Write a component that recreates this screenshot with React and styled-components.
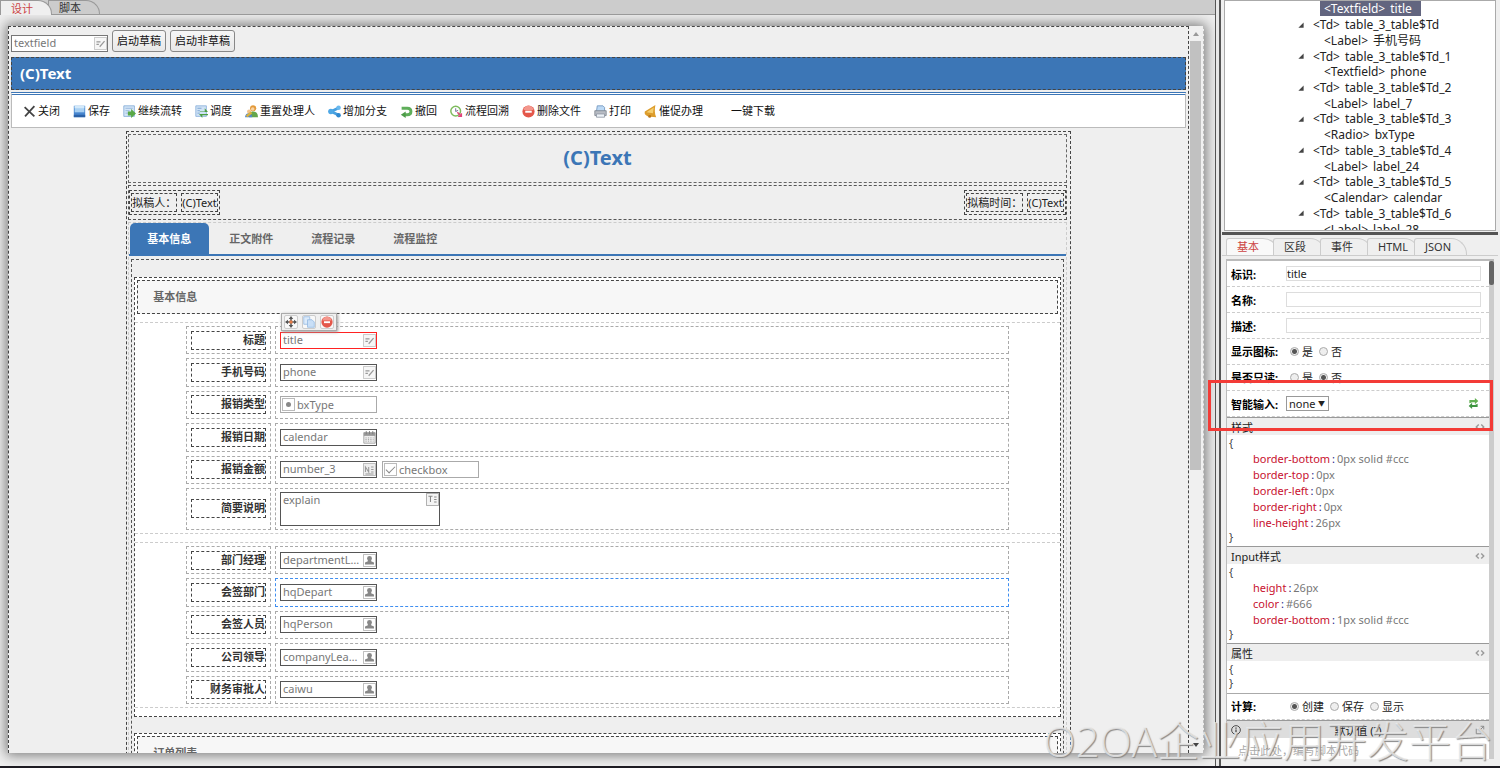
import React from "react";
import styled, { createGlobalStyle } from "styled-components";

const Colors = {
  Blue: "#3c76b6",
  Page: "#efefef",
  Bar: "#cccccc",
  Dark: "#444444",
  Red: "#f33b37",
};

const GlobalStyle = createGlobalStyle`
  * {
    box-sizing: border-box;
  }
  body {
    margin: 0;
    overflow: hidden;
    background: #efefef;
    font-family: "Noto Sans", "Noto Sans CJK SC", sans-serif;
    font-size: 11px;
    color: #222;
  }
  button, input, select, textarea {
    font: inherit;
    color: inherit;
    margin: 0;
  }
  ul, h1, h2, h3, p {
    margin: 0;
    padding: 0;
    font: inherit;
    list-style: none;
  }
`;

const App = styled.div`
  position: relative;
  display: flex;
  height: 100vh;
  overflow: hidden;
  border-bottom: 2px solid #1d1b22;
`;

/* ---------- designer ---------- */

const Designer = styled.main`
  display: flex;
  flex-direction: column;
  flex: 1;
  min-width: 0;
`;

const TopTabs = styled.div`
  display: flex;
  height: 15px;
  flex: none;
  background: ${Colors.Bar};
  border-bottom: 1px solid #999;
`;

const TopTab = styled.button`
  width: 52px;
  height: ${(p) => (p.$active ? 15 : 14)}px;
  margin-right: -4px;
  padding: 0 10px;
  border: 1px solid #999;
  border-bottom: 0;
  border-radius: 0 14px 0 0;
  background: ${(p) => (p.$active ? Colors.Page : Colors.Bar)};
  color: ${(p) => (p.$active ? "#c44" : "#333")};
  position: relative;
  z-index: ${(p) => (p.$active ? 1 : 0)};
  line-height: 13px;
  text-align: left;
  white-space: nowrap;
`;

const Stage = styled.div`
  display: flex;
  flex: 1;
  min-height: 0;
  padding: 11px 11px 13px 8px;
  overflow: hidden;
`;

const Sheet = styled.div`
  display: flex;
  flex: 1;
  min-width: 0;
  background: ${Colors.Page};
  border-right: 1px dashed #bbb;
  box-shadow: 0 0 12px 2px #777;
`;

const Form = styled.div`
  flex: 1;
  min-width: 0;
  overflow: hidden;
  padding: 2px;
  border: 1px dashed ${Colors.Dark};
  border-bottom: 0;
`;

const ScrollTrack = styled.div`
  display: flex;
  flex-direction: column;
  align-items: center;
  width: 14px;
  padding: 6px 2px 6px 1px;
  background: #f0f0f0;
`;

const Arrow = styled.i`
  flex: none;
  border: 3px solid transparent;
  border-top: ${(p) => (p.$down ? "4px solid #444" : "0")};
  border-bottom: ${(p) => (p.$down ? "0" : "4px solid #999")};
`;

const ScrollThumb = styled.div`
  width: 100%;
  height: 60%;
  margin: 5px 0 auto;
  background: #c1c1c1;
`;

const TopRow = styled.div`
  display: flex;
  gap: 4px;
  height: 28px;
  align-items: flex-start;
  padding-top: 1px;
`;

const FieldSlot = styled.div`
  padding-top: 5px;
`;

const DraftButton = styled.button`
  height: 22px;
  padding: 0 4px;
  border: 1px solid #888;
  border-radius: 3px;
  background: linear-gradient(#f6f6f6, #e8e8e8);
  color: #111;
  line-height: 20px;
`;

const Banner = styled.div`
  height: 33px;
  padding: 0 8px;
  border: 1px dashed ${Colors.Dark};
  background: ${Colors.Blue};
  color: #fff;
  font-size: 15px;
  font-weight: 700;
  line-height: 30px;
`;

const Toolbar = styled.div`
  display: flex;
  gap: 13px;
  align-items: center;
  height: 36px;
  margin: 2px 0 3px;
  padding: 0 11px;
  border: 1px solid #bbb;
  border-top: 3px double ${Colors.Blue};
  background: #fff;
`;

const ToolButton = styled.button`
  display: flex;
  gap: 2px;
  align-items: center;
  padding: 0;
  border: 0;
  background: none;
  color: #111;
  line-height: 14px;
  white-space: nowrap;
  svg {
    width: 13px;
    height: 13px;
    flex: none;
  }
`;

const Container = styled.div`
  width: 80.4%;
  margin: 0 auto;
  padding: 2px 3px 0 1px;
  border: 1px dashed ${Colors.Dark};
  border-bottom: 0;
`;

const TitleBox = styled.h1`
  height: 49px;
  border: 1px dashed #666;
  color: ${Colors.Blue};
  font-size: 20px;
  font-weight: 700;
  line-height: 46px;
  text-align: center;
`;

const Meta = styled.div`
  display: flex;
  justify-content: space-between;
  align-items: center;
  height: 35px;
  margin-top: 2px;
  border: 1px dashed #555;
`;

const MetaGroup = styled.div`
  display: flex;
  gap: 4px;
  padding: 2px 1px;
  border: 1px dashed ${Colors.Dark};
`;

const MetaText = styled.span`
  height: 19px;
  border: 1px dashed ${Colors.Dark};
  line-height: 17px;
  white-space: nowrap;
`;

const TabPage = styled.div`
  margin-top: 2px;
  border: 1px dashed #ccc;
`;

const TabList = styled.div`
  display: flex;
  gap: 3px;
  padding-left: 1px;
  border-bottom: 2px solid ${Colors.Blue};
`;

const Tab = styled.button`
  width: 79px;
  height: 31px;
  padding: 0 1px 2px 0;
  border: 0;
  border-radius: 5px 5px 0 0;
  background: ${(p) => (p.$active ? Colors.Blue : "transparent")};
  color: ${(p) => (p.$active ? "#fff" : "#666")};
  font-weight: 700;
`;

const TabBody = styled.div`
  margin: 3px 2px 0;
  padding: 17px 2px 0;
  border: 1px dashed #555;
`;

const Section = styled.section`
  margin-bottom: 16px;
  padding: 2px 0 8px;
  border: 1px dashed ${Colors.Dark};
  background: #fff;
`;

const SectionTitle = styled.h2`
  height: 34px;
  margin: 0 2px 8px;
  padding: 0 15px;
  border: 1px dashed ${Colors.Dark};
  background: #f7f7f7;
  color: #666;
  font-weight: 700;
  line-height: 32px;
`;

const TableBox = styled.div`
  margin-bottom: ${(p) => (p.$gap ? 8 : 0)}px;
  padding: 3px 0;
  border-top: 1px dashed #ccc;
  border-bottom: 1px dashed #ccc;
`;

const FormGrid = styled.div`
  display: grid;
  grid-template-columns: 85px 1fr;
  grid-template-rows: ${(p) => p.$rows};
  gap: 4px;
  width: 89%;
  height: ${(p) => p.$height}px;
  margin: 0 auto;
`;

const Cell = styled.div`
  display: flex;
  align-items: center;
  gap: 5px;
  min-width: 0;
  padding: 0 4px;
  border: 1px dashed ${(p) => (p.$selected ? "#3f8ef0" : "#aaa")};
`;

const Label = styled.label`
  flex: 1;
  height: 19px;
  border: 1px dashed ${Colors.Dark};
  color: #333;
  font-weight: 700;
  line-height: 16px;
  text-align: right;
  white-space: nowrap;
`;

const FieldBox = styled.div`
  position: relative;
  display: flex;
  align-items: ${(p) => (p.$tall ? "flex-start" : "center")};
  width: ${(p) => (p.$tall ? 160 : 97)}px;
  height: ${(p) => (p.$tall ? 34 : 17)}px;
  flex: none;
  padding: 0 0 0 ${(p) => (p.$lead ? 1 : 2)}px;
  gap: 1px;
  border: 1px solid ${(p) => p.$line || "#555"};
  background: #fff;
  color: #777;
  > svg {
    width: 13px;
    height: 13px;
    flex: none;
  }
`;

const FieldInput = styled.input`
  flex: 1;
  min-width: 0;
  width: 0;
  height: 15px;
  padding: 0 0 2px;
  border: 0;
  outline: 0;
  background: transparent;
  line-height: 13px;
  text-overflow: ellipsis;
`;

const FieldArea = styled.textarea`
  flex: 1;
  width: 0;
  height: 30px;
  padding: 0;
  border: 0;
  outline: 0;
  resize: none;
  background: transparent;
  line-height: 14px;
`;

const Mark = styled.input`
  appearance: none;
  display: grid;
  place-items: center;
  width: 13px;
  height: 13px;
  border: 1px solid #bbb;
  &[type="radio"]::before {
    content: "";
    width: 5px;
    height: 5px;
    border-radius: 50%;
    background: #888;
  }
  &[type="checkbox"]::before {
    content: "";
    width: 8px;
    height: 4px;
    margin-bottom: 3px;
    border: solid #888;
    border-width: 0 0 1px 1px;
    transform: rotate(-45deg);
  }
`;

const MarkLabel = styled.label`
  display: flex;
  gap: 2px;
  align-items: center;
  line-height: 15px;
`;

const Actions = styled.div`
  position: absolute;
  z-index: 2;
  left: 0;
  bottom: 17px;
  display: flex;
  gap: 4px;
  align-items: center;
  height: 18px;
  padding: 0 2px;
  border: 1px solid #aaa;
  background: #f0f0f0;
  box-shadow: 1px 1px 3px #999;
`;

const ActionButton = styled.button`
  display: flex;
  width: 14px;
  height: 14px;
  padding: 0;
  border: 1px solid #ccc;
  border-radius: 2px;
  background: #f8f8f8;
  svg {
    width: 12px;
    height: 12px;
  }
`;

/* ---------- property side ---------- */

const Divider = styled.div`
  width: 6px;
  flex: none;
  border: solid #555;
  border-width: 0 2px 0 1px;
  background: #e8e8e8;
`;

const Side = styled.aside`
  display: flex;
  flex-direction: column;
  width: 279px;
  flex: none;
  padding: 0 2px 7px 1px;
`;

const TreeBox = styled.div`
  height: 231px;
  flex: none;
  margin: 0 2px;
  overflow: hidden;
  border: 1px solid #aaa;
  background: #fff;
`;

const Tree = styled.ul`
  display: grid;
  grid-auto-rows: 1fr;
  height: 236px;
  padding-left: 73px;
  font-size: 12px;
`;

const TreeItem = styled.li`
  display: flex;
  align-items: center;
  gap: 9px;
  padding-left: ${(p) => (p.$leaf ? 26 : 0)}px;
  color: #222;
  line-height: 15px;
  svg {
    width: 6px;
    height: 6px;
  }
`;

const TreeText = styled.span`
  display: flex;
  gap: 5px;
  margin-left: ${(p) => (p.$selected ? -4 : 0)}px;
  padding: ${(p) => (p.$selected ? "0 9px 0 4px" : "0")};
  background: ${(p) => (p.$selected ? "#62657f" : "none")};
  color: ${(p) => (p.$selected ? "#fff" : "inherit")};
`;

const SideTabs = styled.div`
  display: flex;
  height: 24px;
  flex: none;
  margin-top: 1px;
  padding: 3px 0 0 4px;
  border-top: 3px solid #555;
  border-bottom: 1px solid #ccc;
`;

const SideTab = styled.button`
  width: 53px;
  height: 17px;
  margin-right: -6px;
  padding: 0 10px;
  border: 1px solid #ccc;
  border-bottom: 0;
  border-radius: 3px 16px 0 0;
  background: ${(p) => (p.$active ? "#f9f9f9" : Colors.Page)};
  color: ${(p) => (p.$active ? "#c44" : "#333")};
  line-height: 16px;
  text-align: left;
  white-space: nowrap;
`;

const PropertyBox = styled.div`
  display: flex;
  flex: 1;
  min-height: 0;
  margin: 3px 4px 0 4px;
  border-top: 2px solid #bbb;
  border-left: 1px solid #bbb;
  background: #fff;
`;

const Properties = styled.div`
  flex: 1;
  min-width: 0;
  overflow: hidden;
`;

const SideScroll = styled.div`
  width: 5px;
  background: #ccc;
`;

const SideThumb = styled.div`
  height: 24px;
  border-radius: 2px;
  background: #666;
`;

const PropertyRow = styled.div`
  display: flex;
  align-items: center;
  height: 26px;
  padding: 0 8px 0 4px;
  border-bottom: 1px dashed #ccc;
`;

const Clip = styled.div`
  display: flex;
  align-items: center;
  flex: 1;
  height: ${(p) => (p.$cut ? 13 : 24)}px;
  line-height: 24px;
  overflow: hidden;
`;

const PropertyName = styled.span`
  width: 55px;
  flex: none;
  color: #000;
  font-weight: 700;
  white-space: nowrap;
`;

const PropertyInput = styled.input`
  flex: 1;
  min-width: 0;
  height: 15px;
  padding: 0;
  border: 1px solid #ddd;
  color: #222;
  line-height: 13px;
`;

const RadioLabel = styled.label`
  display: flex;
  align-items: center;
  gap: 3px;
  margin-right: 6px;
  color: #222;
`;

const RadioGroup = styled.div`
  display: flex;
  padding-left: 4px;
`;

const Radio = styled.input`
  appearance: none;
  width: 9px;
  height: 9px;
  border: 1px solid #aaa;
  border-radius: 50%;
  background: #eee;
  &:checked {
    background: radial-gradient(#555 0 2px, #eee 3px);
  }
`;

const SelectBox = styled.div`
  position: relative;
  margin-right: auto;
  &::after {
    content: "▼";
    position: absolute;
    right: 4px;
    top: 0;
    font-size: 7px;
    line-height: 15px;
    pointer-events: none;
  }
`;

const Select = styled.select`
  display: block;
  appearance: none;
  width: 43px;
  height: 15px;
  padding: 0 0 0 2px;
  border: 1px solid #999;
  border-radius: 0;
  background: #fff;
  line-height: 13px;
`;

const RefreshButton = styled.button`
  display: flex;
  padding: 0 2px 0 0;
  border: 0;
  background: none;
  svg {
    width: 11px;
    height: 11px;
  }
`;

const BlockHead = styled.h3`
  display: flex;
  justify-content: space-between;
  align-items: center;
  height: 18px;
  padding: 0 4px;
  border-top: 1px solid #999;
  background: ${(p) => (p.$dark ? "#ddd" : "#eee")};
  color: #222;
  svg {
    width: 10px;
    height: 10px;
  }
`;

const Css = styled.div`
  padding: 0 2px 3px;
  line-height: 16px;
  color: #444;
`;

const CloseBrace = styled.div`
  line-height: 12px;
`;

const Rule = styled.div`
  padding-left: 24px;
  color: #777;
  white-space: nowrap;
`;

const RuleName = styled.span`
  color: #c8102e;
`;

const Colon = styled.span`
  padding: 0 2px;
  color: #228;
`;

const CalcLine = styled.div`
  height: 2px;
  border-bottom: 1px solid #aaa;
`;

const ScriptHint = styled.p`
  padding: 4px 11px;
  color: #aaa;
`;

const Highlight = styled.div`
  position: absolute;
  top: 380px;
  right: 7px;
  width: 285px;
  height: 51px;
  border: 3px solid ${Colors.Red};
`;

const Watermark = styled.div`
  position: absolute;
  right: 7px;
  bottom: -3px;
  color: rgba(236, 236, 236, 0.8);
  font-family: "Open Sans", "Noto Sans CJK SC", sans-serif;
  font-size: 42px;
  font-weight: 300;
  line-height: 56px;
  text-shadow: 1px 1px 1px #888;
  white-space: nowrap;
  pointer-events: none;
`;

/* ---------- icons ---------- */

const Svg = ({ children }) => (
  <svg viewBox="0 0 16 16" fill="none" aria-hidden="true">
    {children}
  </svg>
);

const icons = {
  close: <path d="M2 2.500 14 14M14 1.500 2.500 14" stroke="#444" strokeWidth="2.200" />,
  save: (
    <>
      <path d="M1 1h14v14H1z" fill="#4786cf" />
      <path d="M2 1h12v8H2z" fill="#a9d0f2" />
      <path d="M2 1h12v3H2z" fill="#d3e9fa" />
      <path d="M1 12h14v3H1z" fill="#2c62a8" />
    </>
  ),
  flow: (
    <>
      <path d="M1 1h13v13H1z" fill="#d5e6f7" stroke="#7fa8d4" />
      <path d="M3 4h9M3 7h5M3 10h4" stroke="#8bb0d9" />
      <path d="M6 8h4V5l6 5.500-6 5.500v-3H6z" fill="#58a846" />
    </>
  ),
  dispatch: (
    <>
      <path d="M1 1h13v13H1z" fill="#cfe2f5" stroke="#86aeda" />
      <path d="M3 4h5M3 7h3M3 10h3" stroke="#6e9bcc" />
      <path d="M6 8h6V4l4 4.500H6zM16 12.500H9V16l-4-5h11z" fill="#4da044" />
    </>
  ),
  person: (
    <>
      <circle cx="10" cy="4" r="3.800" fill="#e39a3b" />
      <circle cx="9.500" cy="5" r="2.200" fill="#f8d3a4" />
      <path d="M5 15c0-5 2-7 5-7s6 2 6 7z" fill="#64a64a" />
      <circle cx="5" cy="8" r="2.500" fill="#f1c28e" />
      <path d="M0 15c0-3 2-5 4.500-5S9 12 9 15z" fill="#5688c8" />
      <path d="M1 13 7 8l2 2-6 5z" fill="#d9b13c" />
    </>
  ),
  branch: (
    <>
      <path d="M14 3 4 8l10 5" stroke="#47a0e0" strokeWidth="3.500" />
      <circle cx="13" cy="3.500" r="2.800" fill="#68b8ee" />
      <circle cx="13" cy="12.500" r="2.800" fill="#2f87cf" />
      <circle cx="3.500" cy="8" r="3.300" fill="#4fa8e6" />
    </>
  ),
  undo: (
    <>
      <path d="M2 4h7c6 0 6 8 0 8H6" stroke="#5fae5a" strokeWidth="3.500" />
      <path d="M7 8v8l-6-4z" fill="#4c9c48" />
    </>
  ),
  clock: (
    <>
      <circle cx="7" cy="7.500" r="6" fill="#fff" stroke="#7dbb5c" strokeWidth="1.800" />
      <path d="M7 4v4l3-1.500" stroke="#557" />
      <path d="m9 9 5 5m0-4v4h-4" stroke="#e2447c" strokeWidth="1.800" />
    </>
  ),
  remove: (
    <>
      <circle cx="8" cy="8" r="7.500" fill="#e4574a" />
      <path d="M2 6a6 5 0 0 1 12 0z" fill="#f3968c" />
      <path d="M4 7h8v2.500H4z" fill="#fff" />
    </>
  ),
  print: (
    <>
      <path d="M4 1h7l2 2v5H3z" fill="#bcd9f5" stroke="#6d93bd" />
      <path d="M1 7h14v6H1z" fill="#b8bcc4" stroke="#7c828c" />
      <path d="M3 11h10v4H3z" fill="#eef3f8" stroke="#8a93a0" />
    </>
  ),
  horn: (
    <>
      <path d="M14 0 1 8c-1 3 1 5 4 6l10 1c-2-4-2-10-1-15z" fill="#dd9d2c" />
      <path d="M12 3 3 9l8 1z" fill="#f5cf70" />
      <circle cx="7" cy="14" r="1.800" fill="#b9761b" />
    </>
  ),
  edit: (
    <>
      <path d="M.5.5h15v15H.5z" fill="#f6f6f6" stroke="#bbb" />
      <path d="M3 6h5M3 9h3M7 12l6-7" stroke="#999" strokeWidth="1.500" />
    </>
  ),
  calendar: (
    <>
      <path d="M1 2h14v13H1z" fill="#eee" stroke="#999" />
      <path d="M1 2h14v4H1z" fill="#999" />
      <path d="M3 8.500h10M3 10.500h10M3 12.500h10" stroke="#999" strokeDasharray="1.500 1.500" />
      <path d="M4 0v4M8 0v4M12 0v4" stroke="#777" />
    </>
  ),
  number: (
    <>
      <path d="M.5.5h15v15H.5z" fill="#eee" stroke="#aaa" />
      <path d="M3 11V5l4 6V5M10 5h3M10 8h3M10 11h3M3 13.500h10" stroke="#999" strokeWidth="1.300" />
    </>
  ),
  area: (
    <>
      <path d="M.5.5h15v15H.5z" fill="#f4f4f4" stroke="#999" />
      <path d="M3 4h5M5.500 4v7M10 5h3M10 8h3M10 11h3" stroke="#888" strokeWidth="1.300" />
    </>
  ),
  user: (
    <>
      <path d="M.5.5h15v15H.5z" fill="#fff" stroke="#aaa" />
      <circle cx="8" cy="5.500" r="3" fill="#888" />
      <path d="M6 7h4v2l3.500 1.500V13h-11v-2.500L6 9z" fill="#888" />
    </>
  ),
  move: (
    <>
      <path d="M8 2v12M2 8h12" stroke="#555" strokeWidth="2" />
      <path d="m8 0 3 4H5zM8 16l3-4H5zM0 8l4-3v6zM16 8l-4-3v6z" fill="#555" />
      <path d="M6 6h4v4H6z" fill="#e87b45" />
    </>
  ),
  copy: (
    <>
      <path d="M1 1h8v10H1z" fill="#dcebfb" stroke="#8fb5e0" />
      <path d="M6 5h6l3 3v7H6z" fill="#c9dff7" stroke="#8fb5e0" />
    </>
  ),
  refresh: (
    <>
      <path d="M2 7.500V3h8V0l5 4.500L10 9V6H6z" fill="#62b052" />
      <path d="M14 8.500V13H6v3l-5-4.500L6 7v3h4z" fill="#3d9440" />
    </>
  ),
  code: <path d="M6 4 2 8l4 4M10 4l4 4-4 4" stroke="#999" strokeWidth="2.200" />,
  info: (
    <>
      <circle cx="8" cy="8" r="7" stroke="#444" strokeWidth="1.500" />
      <path d="M8 4v2M8 7v5" stroke="#444" strokeWidth="2" />
    </>
  ),
  expand: <path d="M2 6v8h8M9 2h5v5M14 2 8 8" stroke="#888" strokeWidth="1.500" />,
  caret: <path d="M15 1v14H1z" fill="#444" />,
};

const Icon = ({ name }) => <Svg>{icons[name]}</Svg>;

/* ---------- data ---------- */

const tools = [
  ["关闭", "close"],
  ["保存", "save"],
  ["继续流转", "flow"],
  ["调度", "dispatch"],
  ["重置处理人", "person"],
  ["增加分支", "branch"],
  ["撤回", "undo"],
  ["流程回溯", "clock"],
  ["删除文件", "remove"],
  ["打印", "print"],
  ["催促办理", "horn"],
  ["一键下载", ""],
];

const basicRows = [
  { label: "标题", id: "title", icon: "edit", line: "#f22", actions: true },
  { label: "手机号码", id: "phone", icon: "edit" },
  { label: "报销类型", id: "bxType", mark: "radio" },
  { label: "报销日期", id: "calendar", icon: "calendar" },
  { label: "报销金额", id: "number_3", icon: "number", extra: "checkbox" },
  { label: "简要说明", id: "explain", icon: "area", tall: true },
];

const approvalRows = [
  { label: "部门经理", id: "departmentLeader", icon: "user" },
  { label: "会签部门", id: "hqDepart", icon: "user", selected: true },
  { label: "会签人员", id: "hqPerson", icon: "user" },
  { label: "公司领导", id: "companyLeader", icon: "user" },
  { label: "财务审批人", id: "caiwu", icon: "user" },
];

const tree = [
  ["Textfield", "title"],
  ["Td", "table_3_table$Td"],
  ["Label", "手机号码"],
  ["Td", "table_3_table$Td_1"],
  ["Textfield", "phone"],
  ["Td", "table_3_table$Td_2"],
  ["Label", "label_7"],
  ["Td", "table_3_table$Td_3"],
  ["Radio", "bxType"],
  ["Td", "table_3_table$Td_4"],
  ["Label", "label_24"],
  ["Td", "table_3_table$Td_5"],
  ["Calendar", "calendar"],
  ["Td", "table_3_table$Td_6"],
  ["Label", "label_28"],
];

const styleRules = [
  ["border-bottom", "0px solid #ccc"],
  ["border-top", "0px"],
  ["border-left", "0px"],
  ["border-right", "0px"],
  ["line-height", "26px"],
];

const inputRules = [
  ["height", "26px"],
  ["color", "#666"],
  ["border-bottom", "1px solid #ccc"],
];

/* ---------- parts ---------- */

const MarkField = ({ type, id }) => (
  <FieldBox $lead $line="#aaa">
    <MarkLabel>
      <Mark id={id} type={type} defaultChecked />
      {id}
    </MarkLabel>
  </FieldBox>
);

const Field = ({ id, icon, line, tall, actions }) => (
  <FieldBox $line={line} $tall={tall}>
    {tall ? (
      <FieldArea id={id} aria-label={id} defaultValue={id} />
    ) : (
      <FieldInput id={id} aria-label={id} defaultValue={id} />
    )}
    <Icon name={icon} />
    {actions && (
      <Actions>
        <ActionButton aria-label="move">
          <Icon name="move" />
        </ActionButton>
        <ActionButton aria-label="copy">
          <Icon name="copy" />
        </ActionButton>
        <ActionButton aria-label="delete">
          <Icon name="remove" />
        </ActionButton>
      </Actions>
    )}
  </FieldBox>
);

const FormTable = ({ rows, template, height, gap }) => (
  <TableBox $gap={gap}>
    <FormGrid $rows={template} $height={height}>
      {rows.map((row) => (
        <React.Fragment key={row.id}>
          <Cell>
            <Label htmlFor={row.id}>{row.label}</Label>
          </Cell>
          <Cell $selected={row.selected}>
            {row.mark ? <MarkField type={row.mark} id={row.id} /> : <Field {...row} />}
            {row.extra && <MarkField type="checkbox" id={row.extra} />}
          </Cell>
        </React.Fragment>
      ))}
    </FormGrid>
  </TableBox>
);

const RadioRow = ({ name, group, options, value, cut }) => (
  <PropertyRow>
    <Clip $cut={cut}>
      <PropertyName>{name}</PropertyName>
      <RadioGroup role="radiogroup" aria-label={name}>
        {options.map((o) => (
          <RadioLabel key={o}>
            <Radio type="radio" name={group} defaultChecked={o === value} />
            {o}
          </RadioLabel>
        ))}
      </RadioGroup>
    </Clip>
  </PropertyRow>
);

const InputRow = ({ name, id, value = "" }) => (
  <PropertyRow>
    <PropertyName as="label" htmlFor={id}>
      {name}
    </PropertyName>
    <PropertyInput id={id} defaultValue={value} />
  </PropertyRow>
);

const CssBlock = ({ title, rules }) => (
  <>
    <BlockHead>
      {title}
      <Icon name="code" />
    </BlockHead>
    <Css>
      <div>{"{"}</div>
      {rules.map(([name, value]) => (
        <Rule key={name}>
          <RuleName>{name}</RuleName>
          <Colon>:</Colon>
          {value}
        </Rule>
      ))}
      <CloseBrace>{"}"}</CloseBrace>
    </Css>
  </>
);

const FormDesigner = () => {
  return (
    <App>
      <GlobalStyle />
      <Designer>
        <TopTabs>
          <TopTab $active>设计</TopTab>
          <TopTab>脚本</TopTab>
        </TopTabs>
        <Stage>
          <Sheet>
            <Form>
              <TopRow>
                <FieldSlot>
                  <Field id="textfield" icon="edit" line="#777" />
                </FieldSlot>
                <DraftButton>启动草稿</DraftButton>
                <DraftButton>启动非草稿</DraftButton>
              </TopRow>
              <Banner>(C)Text</Banner>
              <Toolbar>
                {tools.map(([text, icon]) => (
                  <ToolButton key={text}>
                    <Icon name={icon} />
                    {text}
                  </ToolButton>
                ))}
              </Toolbar>
              <Container>
                <TitleBox>(C)Text</TitleBox>
                <Meta>
                  <MetaGroup>
                    <MetaText>拟稿人：</MetaText>
                    <MetaText>(C)Text</MetaText>
                  </MetaGroup>
                  <MetaGroup>
                    <MetaText>拟稿时间：</MetaText>
                    <MetaText>(C)Text</MetaText>
                  </MetaGroup>
                </Meta>
                <TabPage>
                  <TabList>
                    <Tab $active>基本信息</Tab>
                    <Tab>正文附件</Tab>
                    <Tab>流程记录</Tab>
                    <Tab>流程监控</Tab>
                  </TabList>
                  <TabBody>
                    <Section>
                      <SectionTitle>基本信息</SectionTitle>
                      <FormTable rows={basicRows} template="repeat(5, 1fr) 42px" height={204} gap />
                      <FormTable rows={approvalRows} template="repeat(5, 1fr)" height={158} />
                    </Section>
                    <Section>
                      <SectionTitle>订单列表</SectionTitle>
                    </Section>
                  </TabBody>
                </TabPage>
              </Container>
            </Form>
            <ScrollTrack>
              <Arrow />
              <ScrollThumb />
              <Arrow $down />
            </ScrollTrack>
          </Sheet>
        </Stage>
      </Designer>
      <Divider />
      <Side>
        <TreeBox>
          <Tree>
            {tree.map(([type, name], i) => (
              <TreeItem key={name} $leaf={type !== "Td"}>
                {type === "Td" && <Icon name="caret" />}
                <TreeText $selected={i === 0}>
                  <span>{`<${type}>`}</span>
                  <span>{name}</span>
                </TreeText>
              </TreeItem>
            ))}
          </Tree>
        </TreeBox>
        <SideTabs>
          <SideTab $active>基本</SideTab>
          <SideTab>区段</SideTab>
          <SideTab>事件</SideTab>
          <SideTab>HTML</SideTab>
          <SideTab>JSON</SideTab>
        </SideTabs>
        <PropertyBox>
          <Properties>
            <InputRow name="标识:" id="prop-id" value="title" />
            <InputRow name="名称:" id="prop-name" />
            <InputRow name="描述:" id="prop-description" />
            <RadioRow name="显示图标:" group="showIcon" options={["是", "否"]} value="是" />
            <RadioRow name="是否只读:" group="readonly" options={["是", "否"]} value="否" cut />
            <PropertyRow>
              <PropertyName as="label" htmlFor="smart">
                智能输入:
              </PropertyName>
              <SelectBox>
                <Select id="smart">
                  <option>none</option>
                </Select>
              </SelectBox>
              <RefreshButton aria-label="refresh">
                <Icon name="refresh" />
              </RefreshButton>
            </PropertyRow>
            <CssBlock title="样式" rules={styleRules} />
            <CssBlock title="Input样式" rules={inputRules} />
            <CssBlock title="属性" rules={[]} />
            <CalcLine />
            <RadioRow name="计算:" group="compute" options={["创建", "保存", "显示"]} value="创建" />
            <BlockHead $dark>
              <Icon name="info" />
              <span>默认值 (?)</span>
              <Icon name="expand" />
            </BlockHead>
            <ScriptHint>点击此处，编写脚本代码</ScriptHint>
          </Properties>
          <SideScroll>
            <SideThumb />
          </SideScroll>
        </PropertyBox>
      </Side>
      <Highlight />
      <Watermark>O2OA企业应用开发平台</Watermark>
    </App>
  );
};

export default FormDesigner;
